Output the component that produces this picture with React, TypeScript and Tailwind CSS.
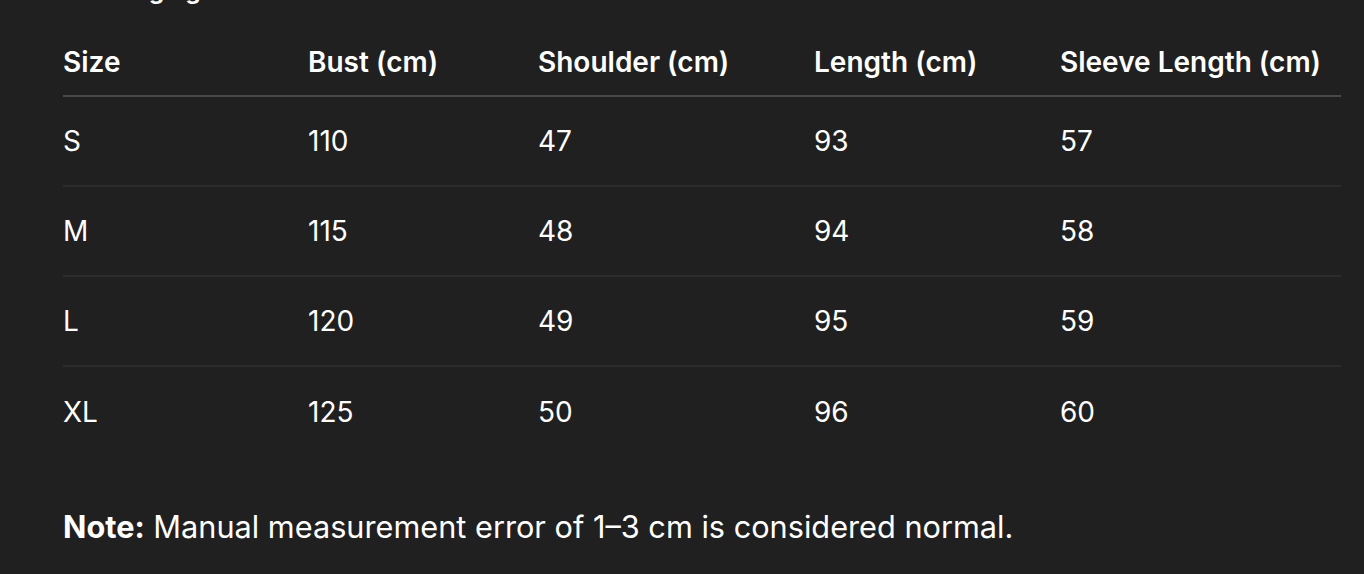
import React from "react";

const headers = ["Size", "Bust (cm)", "Shoulder (cm)", "Length (cm)", "Sleeve Length (cm)"];
const rows = [
  ["S", "110", "47", "93", "57"],
  ["M", "115", "48", "94", "58"],
  ["L", "120", "49", "95", "59"],
  ["XL", "125", "50", "96", "60"],
];

export default function App() {
  return (
    <div
      className="w-[1364px] h-[574px] overflow-hidden bg-[#202020] text-white"
      style={{ fontFamily: "Inter, 'Liberation Sans', sans-serif" }}
    >
      <div className="pl-[63px] pr-[23px]">
        <h2 className="-mt-[24px] h-[30px] text-[24px] leading-[30px] font-bold">Exchanging Sizes</h2>
        <div className="mt-[40px]">
          <div className="grid grid-cols-[245px_230px_276px_246px_1fr] border-b-2 border-[#484848] pb-[17px]">
            {headers.map((h) => (
              <div key={h} className="text-[28px] leading-[32px] font-semibold">
                {h}
              </div>
            ))}
          </div>
          {rows.map((r, i) => (
            <div
              key={r[0]}
              className={`grid grid-cols-[245px_230px_276px_246px_1fr] h-[90px] items-center ${
                i < rows.length - 1 ? "border-b-2 border-[#2c2c2c]" : ""
              }`}
            >
              {r.map((c, j) => (
                <div key={j} className="text-[28px] leading-[32px] font-normal -mt-[1px]">
                  {c}
                </div>
              ))}
            </div>
          ))}
        </div>
        <p className="mt-[51px] text-[30.7px] leading-[38px]">
          <span className="font-bold">Note:</span> Manual measurement error of 1–3 cm is considered normal.
        </p>
      </div>
    </div>
  );
}
